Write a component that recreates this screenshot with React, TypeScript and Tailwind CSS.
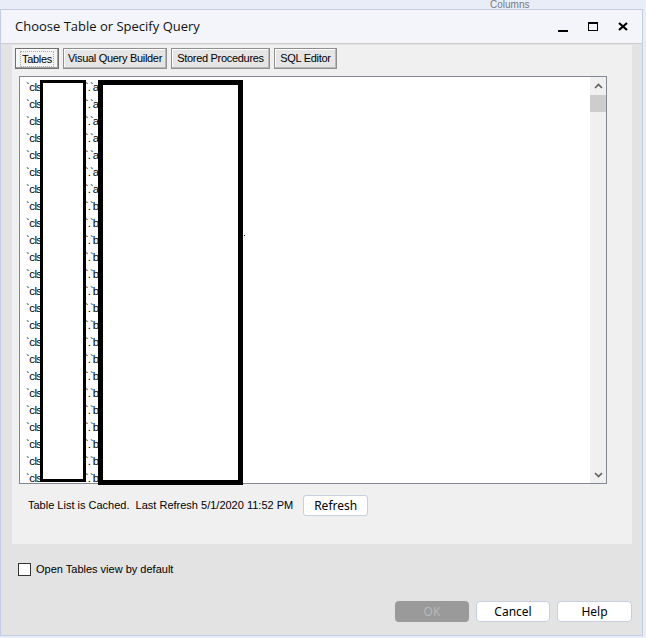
import React from 'react';

const rows = Array.from({ length: 24 }, (_, i) => (i < 7 ? 'a' : 'b'));

const tabs = [
  { label: 'Tables', w: 'w-[44px]', active: true },
  { label: 'Visual Query Builder', w: 'w-[104px]' },
  { label: 'Stored Procedures', w: 'w-[99px]' },
  { label: 'SQL Editor', w: 'w-[63px]' },
];

function Chevron({ up }: { up?: boolean }) {
  return (
    <svg width="9" height="6" viewBox="0 0 9 6" className={up ? '' : 'rotate-180'}>
      <path d="M1 5 L4.5 1.5 L8 5" fill="none" stroke="#606060" strokeWidth="1.6" />
    </svg>
  );
}

export default function App() {
  return (
    <div className="w-[646px] h-[638px] bg-[#e8edf7] overflow-hidden flex flex-col font-['Liberation_Sans',Arial,sans-serif] text-black">
      <div className="h-[9px] shrink-0 overflow-hidden pl-[490px] text-[10px] leading-[9px] text-[#7a7a7a]">Columns</div>
      <div className="flex shrink-0">
        <div className="w-[643px] h-[627px] border border-[#c3cee3] flex flex-col bg-[#e3e3e3]">
          {/* title bar */}
          <div className="h-[34px] shrink-0 bg-[#f3f5fa] border-b border-[#cccccc] flex items-center pl-[14px] pr-[14px]">
            <span className="font-['Open_Sans',sans-serif] text-[13px] text-[#111]">Choose Table or Specify Query</span>
            <div className="ml-auto flex items-center gap-[20px]">
              <div className="w-[10px] h-[2px] bg-black mt-[8px]" />
              <div className="w-[10px] h-[9px] border border-black border-t-2" />
              <svg width="10" height="9" viewBox="0 0 10 9">
                <path d="M1 1 L9 8 M9 1 L1 8" stroke="black" strokeWidth="2.2" />
              </svg>
            </div>
          </div>

          {/* main panel */}
          <div className="ml-[11px] mt-[1px] w-[620px] h-[499px] shrink-0 bg-[#f0f0f0] flex flex-col">
            <div className="flex gap-[4px] pl-[3px] pt-[3px]">
              {tabs.map((t) => (
                <div
                  key={t.label}
                  className={`${t.w} h-[21px] flex items-center justify-center border text-[11px] tracking-[-0.3px] ${
                    t.active
                      ? 'border-[#707070] bg-[#f4f4f4] shadow-[inset_-1px_-1px_0_#a0a0a0,inset_1px_1px_0_#ffffff]'
                      : 'border-[#8f8f8f] bg-[#e5e5e5] shadow-[inset_-1px_-1px_0_#b8b8b8,inset_1px_1px_0_#ffffff]'
                  }`}
                >
                  <span className={t.active ? 'outline outline-1 outline-dotted outline-[#aaa] px-[1px] leading-[14px]' : ''}>{t.label}</span>
                </div>
              ))}
            </div>

            {/* list box */}
            <div className="relative ml-[7px] mt-[7px] w-[588px] h-[408px] border border-[#828790] bg-white flex">
              <div className="relative flex-1 overflow-visible pt-[2px] pl-[6px] text-[11.5px]">
                {rows.map((c, i) => (
                  <div key={i} className="h-[17px] leading-[17px] flex">
                    <span className="w-[59px] tracking-[-0.6px]">`cls</span>
                    <span className="tracking-[-1px]">`.`{c}</span>
                  </div>
                ))}
                <div className="absolute left-[20px] top-[3px] w-[46px] h-[402px] border-[3px] border-black bg-white" />
                <div className="absolute left-[78px] top-[3px] w-[145px] h-[405px] border-[5px] border-black bg-white" />
                <div className="absolute left-[224px] top-[158px] w-[1px] h-[1px] bg-black" />
              </div>
              <div className="w-[16px] bg-[#f0f0f0] flex flex-col items-center">
                <div className="h-[17px] flex items-center justify-center">
                  <Chevron up />
                </div>
                <div className="w-[16px] h-[17px] bg-[#cdcdcd] mt-[1px]" />
                <div className="flex-1" />
                <div className="h-[17px] flex items-center justify-center">
                  <Chevron />
                </div>
              </div>
            </div>

            {/* status */}
            <div className="flex items-center pl-[16px] mt-[11px] gap-[10px]">
              <span className="text-[11px]">Table List is Cached.&nbsp; Last Refresh 5/1/2020 11:52 PM</span>
              <button className="w-[65px] h-[21px] rounded-[3px] border border-[#c5cfdf] bg-white font-['Noto_Sans',sans-serif] text-[12px] leading-none">
                Refresh
              </button>
            </div>
          </div>

          {/* checkbox */}
          <label className="flex items-center gap-[5px] ml-[17px] mt-[17px]">
            <span className="w-[13px] h-[13px] border border-[#333] bg-white" />
            <span className="text-[11px]">Open Tables view by default</span>
          </label>

          {/* buttons */}
          <div className="mt-auto mb-[13px] mr-[10px] flex justify-end gap-[7px]">
            <button className="w-[74px] h-[21px] rounded-[4px] bg-[#9a9a9a] text-[#b8b8b8] font-['Noto_Sans',sans-serif] text-[12px] leading-none">
              OK
            </button>
            <button className="w-[74px] h-[21px] rounded-[4px] border border-[#c5cfdf] bg-white font-['Noto_Sans',sans-serif] text-[12px] leading-none">
              Cancel
            </button>
            <button className="w-[75px] h-[21px] rounded-[4px] border border-[#c5cfdf] bg-white font-['Noto_Sans',sans-serif] text-[12px] leading-none">
              Help
            </button>
          </div>
        </div>
        <div className="flex-1 bg-[#e8edf7]" />
      </div>
    </div>
  );
}
